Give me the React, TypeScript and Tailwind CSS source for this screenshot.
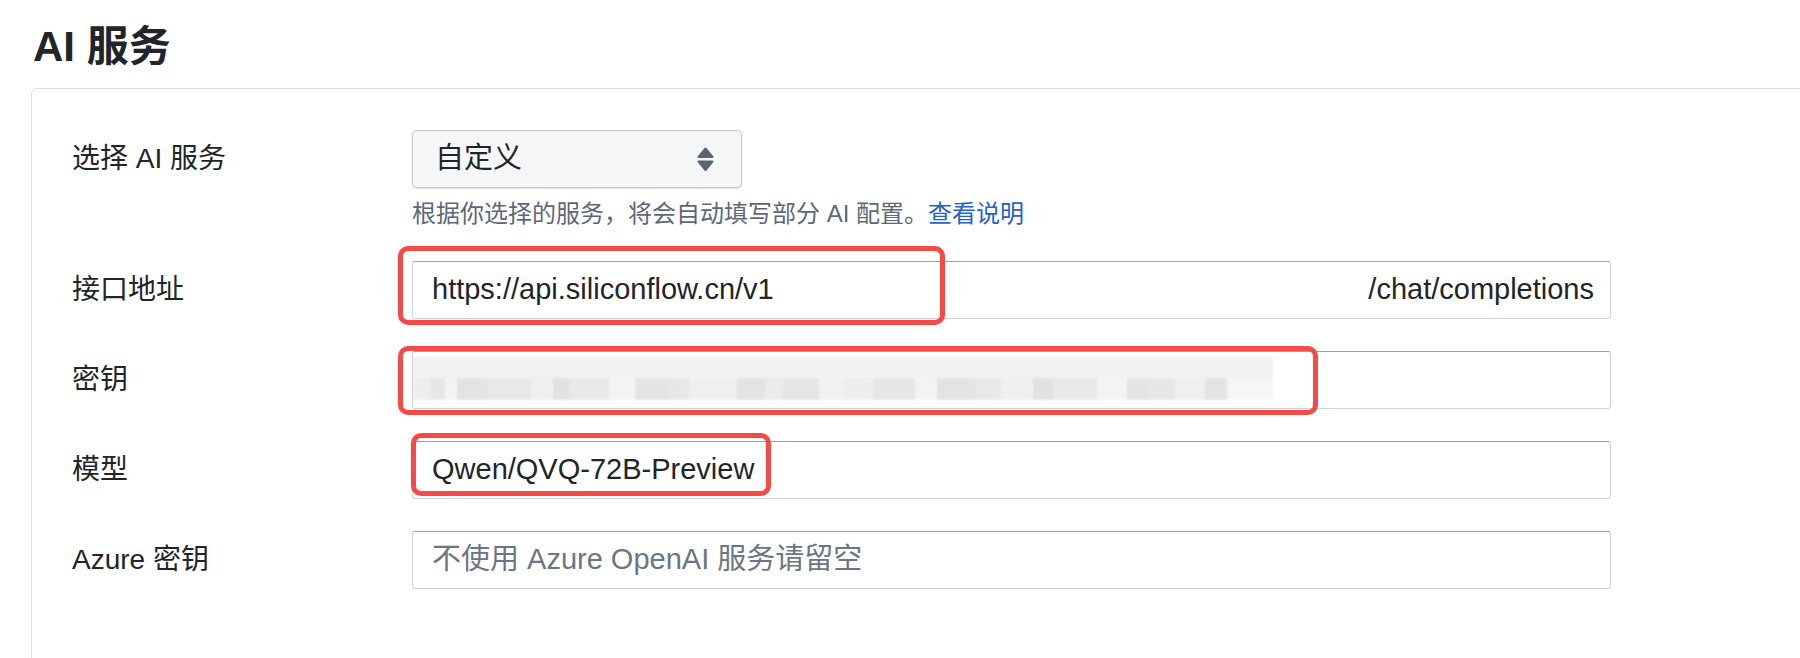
import React from "react";

const grays = [
  "#eeeeee", "#e6e6e6", "#f3f3f3", "#e3e3e3", "#e8e8e8", "#f0f0f0", "#e2e2e2", "#e9e9e9",
  "#f4f4f4", "#e4e4e4", "#e7e7e7", "#efefef", "#e3e3e3", "#ebebeb", "#e5e5e5", "#f2f2f2",
];
const widths = [18, 14, 12, 30, 44, 22, 16, 40, 26, 34, 20, 48, 28, 18, 36, 24, 30, 42, 22, 38, 26, 32, 20, 44, 30, 20, 28, 30, 22];

function BlurredKey() {
  return (
    <div className="flex flex-col pt-[5px] blur-[1px]">
      <div className="h-[21px] w-[860px] bg-[#f2f2f2]" />
      <div className="flex h-[22px]">
        {widths.map((w, i) => (
          <div key={i} style={{ width: w, backgroundColor: grays[i % grays.length] }} className="h-full" />
        ))}
        <div className="h-full w-[46px] bg-[#f6f6f6]" />
      </div>
    </div>
  );
}

function RedBox({ className }: { className: string }) {
  return <div className={"pointer-events-none absolute rounded-[10px] border-[5px] border-[#f44a48] " + className} />;
}

function Label({ children }: { children: React.ReactNode }) {
  return <div className="flex h-[58px] items-center text-[28px] text-[#212529]">{children}</div>;
}

const inputBase =
  "flex h-[58px] w-[1199px] items-center rounded-[3px] border border-[#d2d2d2] border-t-[#a0a0a0] bg-white text-[29px]";

export default function App() {
  return (
    <div className="h-[658px] w-[1800px] overflow-hidden bg-white font-['Liberation_Sans','Noto_Sans_CJK_SC',sans-serif] text-[#212529]">
      <h2 className="mt-[23px] h-[48px] pl-[33px] text-[42px] font-bold leading-[48px] text-[#212529]">AI 服务</h2>
      <div className="ml-[31px] mt-[17px] w-[1800px] rounded-[6px] border border-[#dddddd] pb-[120px] pl-[40px] pt-[41px]">
        {/* Row 1 */}
        <div className="grid grid-cols-[340px_1199px]">
          <Label>选择 AI 服务</Label>
          <div className="flex flex-col">
            <div className="flex h-[58px] w-[330px] items-center justify-between rounded-[5px] border border-[#c9c9c9] bg-[#f5f6f8] pl-[22px] pr-[27px] text-[29px] shadow-[0_1px_2px_rgba(0,0,0,0.12)]">
              <span>自定义</span>
              <svg width="17" height="25" viewBox="0 0 17 25">
                <path d="M8.5 1.5 L15.5 10 L1.5 10 Z" fill="#5b6473" stroke="#5b6473" strokeWidth="2" strokeLinejoin="round" />
                <path d="M1.5 14.5 L15.5 14.5 L8.5 23 Z" fill="#5b6473" stroke="#5b6473" strokeWidth="2" strokeLinejoin="round" />
              </svg>
            </div>
            <div className="mt-[10px] h-[32px] text-[24px] leading-[32px] text-[#5c6779]">
              根据你选择的服务，将会自动填写部分 AI 配置。<span className="text-[#2362c7]">查看说明</span>
            </div>
          </div>
        </div>

        {/* Row 2 */}
        <div className="mt-[31px] grid grid-cols-[340px_1199px]">
          <Label>接口地址</Label>
          <div className="relative">
            <div className={inputBase + " justify-between pl-[19px] pr-[16px]"}>
              <span>https://api.siliconflow.cn/v1</span>
              <span>/chat/completions</span>
            </div>
            <RedBox className="left-[-14px] top-[-15px] h-[79px] w-[547px]" />
          </div>
        </div>

        {/* Row 3 */}
        <div className="mt-[32px] grid grid-cols-[340px_1199px]">
          <Label>密钥</Label>
          <div className="relative">
            <div className="h-[58px] w-[1199px] overflow-hidden rounded-[3px] border border-[#d2d2d2] border-t-[#a0a0a0] bg-white">
              <BlurredKey />
            </div>
            <RedBox className="left-[-14px] top-[-5px] h-[69px] w-[920px]" />
          </div>
        </div>

        {/* Row 4 */}
        <div className="mt-[32px] grid grid-cols-[340px_1199px]">
          <Label>模型</Label>
          <div className="relative">
            <div className={inputBase + " pl-[19px]"}>
              <span>Qwen/QVQ-72B-Preview</span>
            </div>
            <RedBox className="left-[-1px] top-[-8px] h-[63px] w-[360px]" />
          </div>
        </div>

        {/* Row 5 */}
        <div className="mt-[32px] grid grid-cols-[340px_1199px]">
          <Label>Azure 密钥</Label>
          <div className={inputBase + " pl-[19px] text-[#6c7585]"}>
            <span>不使用 Azure OpenAI 服务请留空</span>
          </div>
        </div>
      </div>
    </div>
  );
}
